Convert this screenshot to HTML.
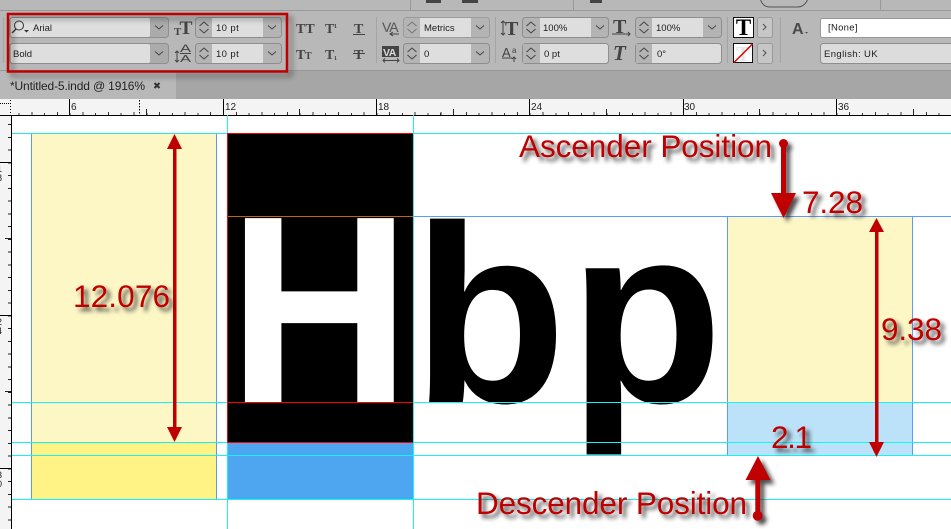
<!DOCTYPE html>
<html><head><meta charset="utf-8"><style>
html,body{margin:0;padding:0;background:#fff;width:951px;height:529px;overflow:hidden}
svg{display:block}
.ui{font-family:"Liberation Sans",sans-serif;font-size:9.5px;fill:#1c1c1c}
.ico{font-family:"Liberation Serif",serif;fill:#444}
.ann{font-family:"Liberation Sans",sans-serif;fill:#c00000}
</style></head><body>
<svg width="951" height="529" viewBox="0 0 951 529" xmlns="http://www.w3.org/2000/svg">
<defs>
<filter id="sh" x="-20%" y="-40%" width="150%" height="200%"><feDropShadow dx="4" dy="4" stdDeviation="2" flood-color="#222" flood-opacity=".8"/></filter>
<filter id="boxsh" x="-10%" y="-30%" width="120%" height="170%"><feDropShadow dx="4" dy="4" stdDeviation="3" flood-color="#000" flood-opacity=".45"/></filter>
<g id="chev" fill="none" stroke="#444" stroke-width="1"><path d="M4.500 9L9 5L13.500 9"/><path d="M4.500 12L9 16L13.500 12"/></g>
<path id="dn" d="M5 8.500L9 12L13 8.500" fill="none" stroke="#444" stroke-width="1"/>
</defs>

<!-- toolbar -->
<rect width="951" height="71" fill="#b8b8b8"/>
<rect y="10" width="951" height="1" fill="#9a9a9a"/>
<rect y="70" width="951" height="1" fill="#989898"/>
<path d="M426 0h15v3h-15zM462 0h16v3h-16zM590 0h12v3h-12z" fill="#444"/>
<path d="M760.500 0c2 5 5 7 9 7h28c5 0 8-3 10-7" fill="none" stroke="#555"/>
<rect x="410" width="1" height="10" fill="#999"/><rect x="573" width="1" height="10" fill="#999"/><rect x="880" width="1" height="10" fill="#999"/>

<!-- tab bar -->
<rect y="71" width="951" height="28" fill="#a6a6a6"/>
<rect y="71" width="176" height="28" fill="#b8b8b8"/>
<text x="10" y="90" font-family="Liberation Sans" font-size="12" fill="#222" textLength="135" lengthAdjust="spacing">*Untitled-5.indd @ 1916%</text>
<path d="M154.500 83l5 5M159.500 83l-5 5" stroke="#333" stroke-width="2"/>

<!-- font fields -->
<rect x="9.500" y="17.500" width="159" height="20" rx="3" fill="#ababab" stroke="#8e8e8e"/>
<rect x="11" y="18" width="139" height="19" rx="2" fill="#dedede"/>
<rect x="9.500" y="43.500" width="159" height="20" rx="3" fill="#ababab" stroke="#8e8e8e"/>
<rect x="11" y="44" width="139" height="19" rx="2" fill="#dedede"/>
<!-- size -->
<rect x="195.500" y="17.500" width="86" height="20" rx="3" fill="#b4b4b4" stroke="#8e8e8e"/>
<rect x="212" y="18" width="51" height="19" fill="#dedede"/>
<rect x="195.500" y="43.500" width="86" height="20" rx="3" fill="#b4b4b4" stroke="#8e8e8e"/>
<rect x="212" y="44" width="51" height="19" fill="#dedede"/>
<!-- kerning -->
<rect x="403.500" y="17.500" width="86" height="20" rx="3" fill="#b4b4b4" stroke="#9c9c9c"/>
<rect x="420" y="18" width="51" height="19" fill="#dedede"/>
<rect x="403.500" y="43.500" width="86" height="20" rx="3" fill="#b4b4b4" stroke="#8e8e8e"/>
<rect x="420" y="44" width="51" height="19" fill="#dedede"/>
<!-- vscale -->
<rect x="522.500" y="17.500" width="86" height="20" rx="3" fill="#b4b4b4" stroke="#8e8e8e"/>
<rect x="540" y="18" width="51" height="19" fill="#dedede"/>
<rect x="522.500" y="43.500" width="86" height="20" rx="3" fill="#dedede" stroke="#8e8e8e"/>
<rect x="523" y="44" width="17" height="19" fill="#b4b4b4"/>
<!-- hscale -->
<rect x="635.500" y="17.500" width="86" height="20" rx="3" fill="#b4b4b4" stroke="#8e8e8e"/>
<rect x="652" y="18" width="51" height="19" fill="#dedede"/>
<rect x="635.500" y="43.500" width="86" height="20" rx="3" fill="#dedede" stroke="#8e8e8e"/>
<rect x="636" y="44" width="16" height="19" fill="#b4b4b4"/>
<!-- arrows buttons -->
<rect x="757.500" y="17.500" width="15" height="20" rx="2" fill="#c6c6c6" stroke="#9a9a9a"/>
<rect x="757.500" y="43.500" width="15" height="20" rx="2" fill="#c6c6c6" stroke="#9a9a9a"/>
<!-- right -->
<rect x="820.500" y="18.500" width="140" height="19" rx="2" fill="#fff" stroke="#999"/>
<rect x="820.500" y="43.500" width="140" height="20" rx="3" fill="#dcdcdc" stroke="#8e8e8e"/>
<!-- separators -->
<g shape-rendering="crispEdges">
<rect x="376" y="17" width="1" height="46" fill="#a4a4a4"/>
<rect x="495" y="17" width="1" height="46" fill="#a4a4a4"/>
<rect x="727" y="17" width="1" height="46" fill="#a4a4a4"/>
<rect x="780" y="17" width="1" height="46" fill="#a4a4a4"/>
<rect x="3" y="17" width="1" height="46" fill="#a4a4a4"/>
</g>

<use href="#dn" x="150" y="17"/><use href="#dn" x="150" y="43"/>
<use href="#dn" x="263" y="17"/><use href="#dn" x="263" y="43"/>
<use href="#dn" x="471" y="17"/><use href="#dn" x="471" y="43"/>
<use href="#dn" x="591" y="17"/><use href="#dn" x="703" y="17"/>
<use href="#chev" x="195" y="17"/><use href="#chev" x="195" y="43"/>
<use href="#chev" x="403" y="17" opacity=".55"/><use href="#chev" x="403" y="43"/>
<use href="#chev" x="522" y="17"/><use href="#chev" x="522" y="43"/>
<use href="#chev" x="635" y="17"/><use href="#chev" x="635" y="43"/>

<!-- font search icon -->
<circle cx="19" cy="25.500" r="4.500" fill="none" stroke="#333"/><path d="M16 29l-4 4" stroke="#333" stroke-width="1.300"/><path d="M24 30h5l-2.500 2.500z" fill="#333"/>

<text class="ui" x="33" y="31" font-size="10">Arial</text>
<text class="ui" x="13" y="57">Bold</text>
<text class="ui" x="216" y="31" letter-spacing=".4">10 pt</text>
<text class="ui" x="216" y="57" letter-spacing=".4">10 pt</text>
<text class="ui" x="424" y="31">Metrics</text>
<text class="ui" x="424" y="57">0</text>
<text class="ui" x="543" y="31">100%</text>
<text class="ui" x="544" y="57">0 pt</text>
<text class="ui" x="656" y="31">100%</text>
<text class="ui" x="657" y="57">0°</text>
<text class="ui" x="828" y="30.500" letter-spacing=".3">[None]</text>
<text class="ui" x="824" y="57" letter-spacing=".4" fill="#333">English: UK</text>

<!-- size icons -->
<text class="ico" x="174" y="35" font-size="11" font-weight="bold">T</text>
<text class="ico" x="179.500" y="34" font-size="19" font-weight="bold" textLength="13" lengthAdjust="spacingAndGlyphs">T</text>
<text x="180" y="52" font-size="11" font-family="Liberation Sans" fill="#444" textLength="11" lengthAdjust="spacingAndGlyphs">A</text>
<rect x="180" y="53" width="11" height="1" fill="#444"/>
<text x="180" y="62" font-size="10" font-family="Liberation Sans" fill="#444" textLength="11" lengthAdjust="spacingAndGlyphs">A</text>
<path d="M177 51v11M175 53l2-2 2 2M175 60l2 2 2-2" stroke="#444" fill="none"/>

<!-- case icons -->
<g class="ico" font-weight="bold">
<text x="296" y="33" font-size="14" fill="#444">TT</text>
<text x="325" y="33" font-size="14">T</text><text x="334" y="28" font-size="6">1</text>
<text x="354" y="33" font-size="14">T</text><rect x="353" y="34" width="12" height="1"/>
<text x="296" y="59" font-size="14">T</text><text x="305" y="59" font-size="10">T</text>
<text x="325" y="59" font-size="14">T</text><text x="334" y="60" font-size="6">1</text>
<text x="354" y="59" font-size="14">T</text><rect x="353" y="53" width="12" height="1"/>
</g>

<!-- kerning icons -->
<text x="382" y="32" font-family="Liberation Sans" font-size="14" fill="#555" letter-spacing="-1">VA</text>
<path d="M399 34h-9M393 32l-3 2 3 2" stroke="#444" fill="none"/>
<rect x="382" y="46" width="17" height="11" fill="#444"/>
<text x="383" y="56" font-family="Liberation Sans" font-weight="bold" font-size="10.500" fill="#ddd" letter-spacing="-.5">VA</text>
<path d="M383 60.500h16M385 58.500l-2 2 2 2M397 58.500l2 2-2 2" stroke="#444" fill="none"/>

<!-- leading -->
<text class="ico" x="505" y="35" font-size="20" font-weight="bold">T</text>
<path d="M503 21v14M501 23l2-2 2 2M501 33l2 2 2-2" stroke="#444" fill="none"/>
<text x="502" y="57" font-family="Liberation Sans" font-size="13" fill="#444">A</text>
<text x="512" y="53" font-family="Liberation Sans" font-size="8" fill="#444">a</text>
<path d="M502 58h10M514 62v-5M512 59l2-2 2 2" stroke="#444" fill="none"/>
<!-- hscale icon -->
<text class="ico" x="613" y="33" font-size="20" font-weight="bold">T</text>
<path d="M612 34h18M628 32l2 2-2 2" stroke="#444" fill="none"/>
<text class="ico" x="613" y="60" font-size="21" font-weight="bold" font-style="italic">T</text>

<!-- fill/stroke swatches -->
<rect x="733.500" y="17.500" width="20" height="20" fill="#fff" stroke="#111"/>
<text x="743.500" y="35" text-anchor="middle" font-family="Liberation Serif" font-weight="bold" font-size="23" fill="#000">T</text>
<rect x="733.500" y="43.500" width="19" height="19" fill="#fff" stroke="#111"/>
<text x="743" y="61" text-anchor="middle" font-family="Liberation Serif" font-weight="bold" font-size="21" fill="#e6e6e6">T</text>
<path d="M734 62.500L752.500 44" stroke="#e00000" stroke-width="1.500"/>
<path d="M763 24l3 3-3 3M763 50l3 3-3 3" stroke="#555" fill="none" stroke-width="1.100"/>

<!-- A. style -->
<text x="792" y="34" font-family="Liberation Sans" font-weight="bold" font-size="16" fill="#4a4a4a">A</text>
<path d="M805 32h3l-1.500 1.500z" fill="#444"/>

<!-- red box -->
<rect x="8" y="14" width="279" height="57.500" fill="none" stroke="#c00000" stroke-width="2.500" filter="url(#boxsh)"/>

<!-- rulers -->
<rect y="99" width="951" height="16" fill="#f4f4f4"/>
<rect y="115" width="11" height="414" fill="#f4f4f4"/>
<rect y="115.500" width="951" height="413.500" fill="#fff" x="12"/>
<rect x="0" y="115" width="951" height="1" fill="#000"/>
<rect x="11" y="115" width="1" height="414" fill="#000"/>
<path d="M0 103.500h11" stroke="#000" stroke-dasharray="1 1"/>
<path d="M10.500 100v15" stroke="#000" stroke-dasharray="1 2"/>
<path d="M139.500 100v15" stroke="#000" stroke-dasharray="1.500 1.500"/>
<g shape-rendering="crispEdges">
<line x1="18.500" y1="114" x2="951" y2="114" stroke="#333" stroke-width="2" stroke-dasharray="1 11.780"/>
<line x1="31.300" y1="113.500" x2="951" y2="113.500" stroke="#333" stroke-width="3" stroke-dasharray="1 24.560"/>
<path d="M69.500 99v16M223.500 99v16M376.500 99v16M529.500 99v16M683.500 99v16M836.500 99v16" stroke="#000"/>
<path d="M146.500 109v6M299.500 109v6M453.500 109v6M606.500 109v6M759.500 109v6M913.500 109v6" stroke="#222"/>
<line x1="9.500" y1="124" x2="9.500" y2="529" stroke="#222" stroke-width="3" stroke-dasharray="1 11.750"/>
<path d="M0 162.500h11M0 315.500h11M0 468.500h11" stroke="#000"/>
<path d="M5 238.500h6M5 391.500h6" stroke="#222"/>
</g>
<g font-family="Liberation Sans" font-size="10" fill="#222">
<text x="71" y="110">6</text><text x="225" y="110">12</text><text x="378" y="110">18</text><text x="531" y="110">24</text><text x="684" y="110">30</text><text x="838" y="110">36</text>
<text x="-3" y="172" font-size="9">1</text><text x="-3" y="181" font-size="9">8</text>
<text x="-3" y="325" font-size="9">2</text><text x="-3" y="334" font-size="9">4</text>
<text x="-3" y="478" font-size="9">3</text><text x="-3" y="487" font-size="9">0</text>
</g>

<!-- page fills -->
<g shape-rendering="crispEdges">
<rect x="31" y="133" width="186" height="309" fill="#fdf7c6"/>
<rect x="31" y="442" width="186" height="57" fill="#fff385"/>
<rect x="728" y="217" width="184" height="185" fill="#fdf7c6"/>
<rect x="728" y="402" width="184" height="53" fill="#bbe2f9"/>
<rect x="228" y="134" width="185" height="308" fill="#000"/>
<rect x="228" y="443" width="185" height="56" fill="#4da6ef"/>
<!-- guides -->
<rect x="31" y="133" width="1" height="366" fill="#5b9bdf"/>
<rect x="216" y="133" width="1" height="366" fill="#5b9bdf"/>
<rect x="727" y="216" width="1" height="239" fill="#5b9bff"/>
<rect x="912" y="216" width="1" height="239" fill="#5b9bff"/>
<rect x="413" y="216" width="538" height="1" fill="#5b9bff"/>
<rect x="228" y="216" width="185" height="1" fill="#c86400"/>
<rect x="12" y="133" width="939" height="1" fill="#22e6f0"/>
</g>

<!-- Hbp glyphs -->
<g font-family="Liberation Sans" font-weight="bold" font-size="257">
<text transform="translate(228 402) scale(.985 1.04)" fill="#fff">H</text>
<text transform="translate(412.500 402) scale(.98 .985)" fill="#000">b</text>
<text transform="translate(569 402) scale(.98 .985)" fill="#000">p</text>
</g>
<g shape-rendering="crispEdges">
<rect x="12" y="402" width="939" height="1" fill="#11f5f8"/>
<rect x="12" y="442" width="939" height="1" fill="#11f5f8"/>
<rect x="12" y="455" width="939" height="1" fill="#11f5f8"/>
<rect x="12" y="499" width="939" height="1" fill="#11f5f8"/>
<rect x="227" y="115" width="1" height="414" fill="#11f5f8"/>
<rect x="413" y="115" width="1" height="414" fill="#11f5f8"/>
<rect x="227" y="133" width="1" height="310" fill="#f00"/>
<rect x="228" y="133" width="185" height="1" fill="#f00"/>
<rect x="228" y="402" width="185" height="1" fill="#f00"/>
<rect x="228" y="442" width="185" height="1" fill="#f00"/>
</g>

<!-- arrows -->
<g fill="#c00000">
<rect x="173" y="148" width="3.500" height="281"/>
<path d="M174.500 134l7.500 15h-15zM174.500 442l7.500-15h-15z"/>
<rect x="875" y="232" width="3.500" height="211"/>
<path d="M876.500 218l7.500 14h-15zM876.500 457l7.500-15h-15z"/>
</g>
<g filter="url(#sh)" fill="#c00000">
<circle cx="783.500" cy="143.500" r="4.500"/>
<rect x="781" y="144" width="5" height="52"/>
<path d="M771 193h25l-12.500 25z"/>
</g>
<g filter="url(#sh)" fill="#c00000">
<circle cx="757.700" cy="515.700" r="5"/>
<rect x="755.300" y="478" width="5" height="38"/>
<path d="M745.500 480h25l-12.500-24z"/>
</g>

<!-- annotation labels -->
<g class="ann" filter="url(#sh)" font-size="31.500">
<text x="519" y="157" textLength="253">Ascender Position</text>
<text x="476" y="514" textLength="271">Descender Position</text>
<text x="802" y="213" textLength="61">7.28</text>
<text x="881" y="340" textLength="61">9.38</text>
<text x="771" y="448" textLength="41">2.1</text>
<text x="73" y="307" textLength="97">12.076</text>
</g>
</svg>
</body></html>
